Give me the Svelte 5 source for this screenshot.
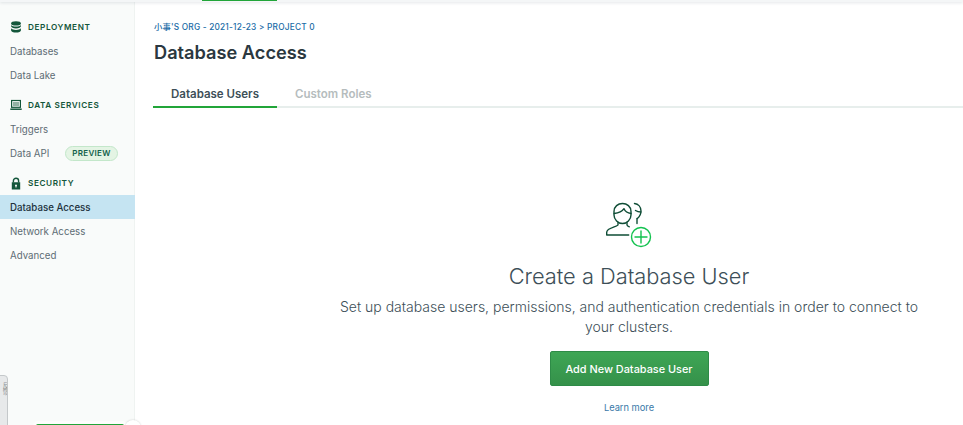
<script>
  const sections = [
    {
      title: 'Deployment',
      icon: 'db',
      items: [{ label: 'Databases' }, { label: 'Data Lake' }]
    },
    {
      title: 'Data Services',
      icon: 'laptop',
      items: [{ label: 'Triggers' }, { label: 'Data API', badge: 'PREVIEW' }]
    },
    {
      title: 'Security',
      icon: 'lock',
      items: [{ label: 'Database Access', active: true }, { label: 'Network Access' }, { label: 'Advanced' }]
    }
  ]
</script>

<div class="page">
  <div class="topbar"><span class="topbar-mark"></span></div>
  <div class="body">
    <aside class="sidebar">
      {#each sections as section}
        <div class="section-title">
          <span class="section-icon">
            {#if section.icon === 'db'}
              <svg width="12" height="12" viewBox="0 0 12 12" fill="#13563a">
                <ellipse cx="6" cy="2.4" rx="4.9" ry="2.1" />
                <path d="M1.1 4v1.3C1.1 6.5 3.3 7.4 6 7.4s4.9-.9 4.9-2.1V4C10 5.1 8.2 5.6 6 5.6S2 5.1 1.1 4z" />
                <path d="M1.1 7.3v2.1c0 1.2 2.2 2.2 4.9 2.2s4.9-1 4.9-2.2V7.3C10 8.4 8.2 8.9 6 8.9S2 8.4 1.1 7.3z" />
              </svg>
            {:else if section.icon === 'laptop'}
              <svg width="12" height="12" viewBox="0 0 12 12" fill="none" stroke="#13563a">
                <rect x="1.6" y="1.5" width="8.8" height="6.8" stroke-width="1.2" />
                <rect x="3" y="3" width="6" height="4" fill="#13563a" stroke="none" opacity="0.45" />
                <path d="M0.3 10.2h11.4" stroke-width="1.5" />
              </svg>
            {:else}
              <svg width="12" height="13" viewBox="0 0 12 13" fill="#13563a">
                <path d="M3.4 5.5V3.8a2.6 2.6 0 0 1 5.2 0v1.7" fill="none" stroke="#13563a" stroke-width="1.4" />
                <path d="M1.800 5.200h8.400v7.200H1.800zM6 7.400a1.100 1.100 0 0 0-.5 2v1.200h1V9.400a1.100 1.100 0 0 0-.5-2z" fill-rule="evenodd" />
              </svg>
            {/if}
          </span>
          {section.title}
        </div>
        {#each section.items as item}
          <div class="nav-item" class:active={item.active}>
            {item.label}
            {#if item.badge}<span class="badge">{item.badge}</span>{/if}
          </div>
        {/each}
      {/each}
      <div class="side-tab"><span>反馈</span></div>
      <div class="progress"></div>
      <div class="progress-knob"><span class="progress-dot"></span></div>
    </aside>

    <main class="content">
      <div class="crumbs">小事'S ORG - 2021-12-23 &gt; PROJECT 0</div>
      <h1>Database Access</h1>
      <div class="tabs">
        <div class="tab tab-active">Database Users</div>
        <div class="tab">Custom Roles</div>
      </div>

      <section class="empty">
        <svg class="empty-icon" width="50" height="48" viewBox="0 0 50 48" fill="none">
          <g stroke="#0f4d36" stroke-width="1.4" stroke-linecap="round" stroke-linejoin="round">
            <path d="M9 9.500C9 4.500 13 1.500 17.500 1.500S26 4.500 26 9.500v3.500c0 4.500-4 8.500-8.500 8.500S9 17.500 9 13z" />
            <path d="M9.200 11.500c4.300-.4 7.800-1.800 9.800-4.800 1 2.300 3.500 4.300 7 4.800" />
            <path d="M13 20.500v2.300c0 2-11.300 2.700-11.300 7.500V33h22" />
            <path d="M22 20.500v2.500c0 .7 1 1.300 2.300 1.800" />
            <path d="M29.500 1.500c3.800.5 6.500 3.500 6.500 7.500 0 3-1.400 5.700-3.600 7.500" />
            <path d="M30.500 8.500c1.500 1 3.500 1.500 5.300 1.500" />
            <path d="M32 16.500v5" />
          </g>
          <g stroke="#13c24f" stroke-width="1.400" stroke-linecap="round">
            <circle cx="36" cy="35" r="9.500" fill="#fff" />
            <path d="M36 29v12M30 35h12" />
          </g>
        </svg>
        <h2>Create a Database User</h2>
        <p>Set up database users, permissions, and authentication credentials in order to connect to your clusters.</p>
        <button class="add">Add New Database User</button>
        <a class="learn" href="#learn">Learn more</a>
      </section>
    </main>
  </div>
</div>

<style>
  :global(body) {
    margin: 0;
    background: #fff;
    font-family: Inter, "Liberation Sans", "Noto Sans CJK SC", sans-serif;
  }

  .page {
    width: 963px;
    height: 425px;
    overflow: hidden;
    display: flex;
    flex-direction: column;
  }

  .topbar {
    height: 2px;
    flex: none;
    background: #f4f6f7;
    box-shadow: 0 1px 3px rgba(30, 50, 70, 0.14);
    position: relative;
    z-index: 1;
  }

  .topbar-mark {
    display: block;
    width: 75px;
    height: 1px;
    margin-left: 202px;
    background: #21a539;
  }

  .body {
    flex: 1;
    display: flex;
    min-height: 0;
  }

  .sidebar {
    width: 134px;
    flex: none;
    position: relative;
    padding-top: 16px;
    background: #f9fbfa;
    border-right: 1px solid #eff3f1;
  }

  .section-title {
    display: flex;
    align-items: center;
    height: 18px;
    margin-bottom: 3px;
    padding-left: 10px;
    color: #13563a;
    font-size: 8.200px;
    font-weight: 600;
    letter-spacing: 0.6px;
    text-transform: uppercase;
  }

  .section-icon {
    width: 18px;
    display: flex;
    align-items: center;
  }

  .nav-item {
    display: flex;
    align-items: center;
    height: 24px;
    padding-left: 10px;
    color: #5d6c74;
    font-size: 9.700px;
  }

  .nav-item + .section-title {
    margin-top: 9px;
  }

  .nav-item.active {
    width: 125px;
    background: #c5e4f2;
    color: #21313c;
    font-weight: 500;
  }

  .badge {
    margin-left: 16px;
    height: 13px;
    padding: 0 6px;
    display: flex;
    align-items: center;
    border: 1px solid #c3e7ca;
    border-radius: 8px;
    background: #e4f4e4;
    color: #116149;
    font-size: 8px;
    font-weight: 600;
    letter-spacing: 0.3px;
  }

  .side-tab {
    position: absolute;
    left: -1px;
    top: 373px;
    width: 7px;
    height: 60px;
    overflow: hidden;
    border: 1px solid #c4c8ca;
    border-radius: 0 4px 4px 0;
    background: #e7e9ea;
    color: #8a9094;
    font-size: 6.500px;
  }

  .side-tab span {
    display: block;
    writing-mode: vertical-rl;
    text-orientation: upright;
    padding-top: 6px;
  }

  .progress {
    position: absolute;
    left: 36px;
    top: 422px;
    width: 88px;
    height: 8px;
    background: #21a539;
    border-radius: 2px;
    box-shadow: 0 0 0 3px #fdfefd;
  }

  .progress-knob {
    position: absolute;
    left: 125px;
    top: 418px;
    width: 16px;
    height: 16px;
    border-radius: 50%;
    background: #fff;
    box-shadow: 0 0 2px rgba(0, 0, 0, 0.2);
  }

  .progress-dot {
    display: block;
    width: 2px;
    height: 3px;
    margin: 5px 0 0 7px;
    background: #21a539;
  }

  .content {
    flex: 1;
    min-width: 0;
    padding: 19px 0 0 18px;
    color: #21313c;
  }

  .crumbs {
    margin-left: 1px;
    color: #1a6ba6;
    font-size: 8.300px;
    font-weight: 500;
    letter-spacing: 0.2px;
    line-height: 13px;
  }

  h1 {
    margin: 7px 0 0 1px;
    font-size: 18.200px;
    font-weight: 600;
    line-height: 23px;
    color: #2b3840;
  }

  .tabs {
    display: flex;
    margin-top: 17px;
    border-bottom: 2px solid #e7eeec;
  }

  .tab {
    padding: 0 18px;
    height: 25px;
    display: flex;
    align-items: center;
    margin-bottom: -2px;
    border-bottom: 2px solid transparent;
    color: #b5bcbd;
    font-size: 11.500px;
    font-weight: 600;
  }

  .tab-active {
    color: #3d4f58;
    border-bottom-color: #21a539;
  }

  .empty {
    width: 952px;
    display: flex;
    flex-direction: column;
    align-items: center;
    margin-top: 94px;
  }

  .empty-icon {
    margin-left: 2px;
  }

  h2 {
    margin: 12px 0 0;
    font-size: 21.800px;
    font-weight: 300;
    line-height: 28px;
    color: #3d4f58;
  }

  p {
    width: 600px;
    margin: 7px 0 0;
    text-align: center;
    font-size: 14px;
    font-weight: 300;
    line-height: 20px;
    color: #3d4f58;
  }

  .add {
    width: 159px;
    height: 35px;
    margin-top: 14px;
    border: 1px solid #2e8b47;
    border-radius: 2px;
    background: linear-gradient(#3ea655, #35914a);
    color: #fff;
    font-family: inherit;
    font-size: 10.900px;
    font-weight: 500;
  }

  .learn {
    margin-top: 16px;
    color: #3a79a8;
    font-size: 9.300px;
    text-decoration: none;
  }
</style>
